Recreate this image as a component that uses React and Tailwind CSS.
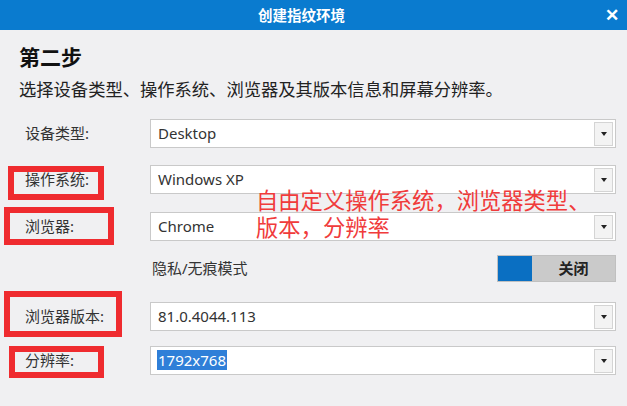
import { useState } from 'react';

const font = { fontFamily: '"Noto Sans", "Noto Sans CJK SC", sans-serif' };

function Select({ value, selected }) {
  return (
    <div className="flex-1 h-[29px] flex items-center bg-white border border-[#c9c9c9] pl-[6px] pr-[2px]">
      <span className={selected ? 'flex-1 text-[15px] leading-none text-[#333]' : 'flex-1 text-[15px] leading-none text-[#333] pl-px'}>
        {selected ? <span className="bg-[#2f7fd8] text-white px-px">{value}</span> : value}
      </span>
      <div className="w-[19px] h-[24px] border border-[#d4d4d4] bg-[#f3f3f3] flex items-center justify-center">
        <div className="w-0 h-0 border-l-[3.5px] border-r-[3.5px] border-t-[4px] border-l-transparent border-r-transparent border-t-[#222]" />
      </div>
    </div>
  );
}

function Row({ label, value, box, selected, className }) {
  return (
    <div className={'flex items-center ' + className}>
      <div className="w-[150px] pl-[25px] flex items-center">
        <span className="relative text-[15px] leading-none text-[#333]">
          {label}
          {box && <span className={'absolute border-[6px] border-[#ef2b2f] ' + box} />}
        </span>
      </div>
      <Select value={value} selected={selected} />
    </div>
  );
}

export default function App() {
  const [incognito] = useState(false);
  return (
    <div className="w-[627px] h-[406px] bg-[#f0f0f2] flex flex-col overflow-hidden relative" style={font}>
      <div className="h-[30px] bg-[#0a7bcf] flex items-center relative">
        <span className="flex-1 text-center pr-[24px] text-white font-bold text-[14.5px] leading-none">创建指纹环境</span>
        <span className="absolute right-[8px] top-[6px] text-white font-bold text-[17px] leading-none">✕</span>
      </div>
      <div className="pl-[19px] mt-[15px] text-[21px] font-bold leading-[24px] text-[#111]">第二步</div>
      <div className="pl-[19px] mt-[11px] text-[17.3px] leading-[20px] text-[#222] whitespace-nowrap">选择设备类型、操作系统、浏览器及其版本信息和屏幕分辨率。</div>
      <div className="mr-[11px] flex flex-col">
        <Row className="mt-[19px]" label="设备类型:" value="Desktop" />
        <Row className="mt-[17px]" label="操作系统:" value="Windows XP" box="-left-[17px] -right-[15px] -top-[6px] -bottom-[13px]" />
        <Row className="mt-[18px]" label="浏览器:" value="Chrome" box="-left-[21px] -right-[40px] -top-[12px] -bottom-[11px]" />
        <div className="mt-[14px] flex items-center h-[27px]">
          <div className="w-[152px]" />
          <span className="flex-1 text-[15px] leading-none text-[#333]">隐私/无痕模式</span>
          <div className="flex h-[27px] w-[119px] border border-[#c0c0c0]">
            <div className="w-[34px] bg-[#0a6fc2]" />
            <div className="flex-1 bg-[#cacaca] flex items-center justify-center text-[15px] font-bold text-[#222] leading-none">
              {incognito ? '开启' : '关闭'}
            </div>
          </div>
        </div>
        <Row className="mt-[20px]" label="浏览器版本:" value="81.0.4044.113" box="-left-[21px] -right-[18px] -top-[18px] -bottom-[13px]" />
        <Row className="mt-[15px]" label="分辨率:" value="1792x768" selected box="-left-[16px] -right-[30px] -top-[7px] -bottom-[10px]" />
      </div>
      <div className="absolute left-[256px] top-[187px] text-[#f03b3b] text-[22.3px] leading-[27px] whitespace-nowrap">
        <div>自由定义操作系统，浏览器类型、</div>
        <div>版本，分辨率</div>
      </div>
    </div>
  );
}
